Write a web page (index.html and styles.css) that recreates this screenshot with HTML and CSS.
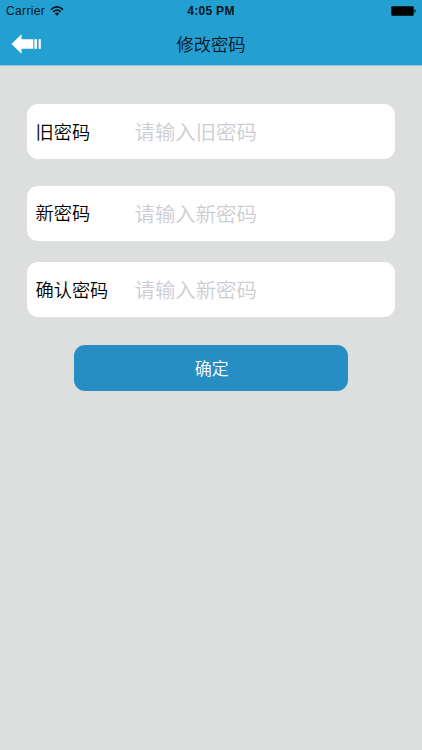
FILE: index.html
```html
<!DOCTYPE html>
<html lang="zh-CN">
<head>
<meta charset="utf-8">
<title>修改密码</title>
<link rel="stylesheet" href="styles.css">
</head>
<body>
<header class="header">
  <div class="status">
    <div class="carrier">
      <span>Carrier</span>
      <svg class="wifi" width="14" height="10" viewBox="0 0 14 10" fill="none" stroke="#04151d" stroke-width="1.7">
        <path d="M1 3.6Q7-1.8 13 3.6M3.2 5.9Q7 2.5 10.8 5.9"/>
        <path d="M4.7 7.4Q7 5.4 9.3 7.4L7 9.7Z" fill="#04151d" stroke="none"/>
      </svg>
    </div>
    <span class="time">4:05 PM</span>
    <svg class="battery" width="25" height="10" viewBox="0 0 25 10">
      <rect x=".3" y=".2" width="22.4" height="9.6" rx="1" fill="#000"/>
      <path d="M23.4 3.2Q24.8 3.4 24.8 5T23.4 6.8Z" fill="#04151d"/>
    </svg>
  </div>
  <div class="nav">
    <svg class="back" width="31" height="20" viewBox="0 0 31 20" fill="#fff">
      <path d="M.5 10 10.5.3V5.3H22.3V14.7H10.5V19.7Z"/>
      <path d="M23.4 5.3H26V14.7H23.4ZM27.6 5.3H29.8V14.7H27.6Z"/>
    </svg>
    <h1 class="title">修改密码</h1>
  </div>
</header>
<form class="form">
  <label class="field"><span class="label">旧密码</span><input class="input" type="password" placeholder="请输入旧密码"></label>
  <label class="field"><span class="label">新密码</span><input class="input" type="password" placeholder="请输入新密码"></label>
  <label class="field"><span class="label">确认密码</span><input class="input" type="password" placeholder="请输入新密码"></label>
  <button class="submit" type="button">确定</button>
</form>
</body>
</html>
```
FILE: styles.css
```css
* { box-sizing: border-box; }

body {
  margin: 0;
  min-height: 750px;
  background: #dddfde;
  font-family: "Liberation Sans", "Noto Sans CJK SC", sans-serif;
  color: #000;
}

.header {
  height: 66px;
  background: #23a0d1;
  border-bottom: 1px solid #8fc3d9;
}

.status {
  display: grid;
  grid-template-columns: 1fr auto 1fr;
  align-items: center;
  height: 22px;
  padding: 0 6px;
}

.carrier {
  display: flex;
  align-items: center;
  gap: 5px;
  font-size: 12px;
  letter-spacing: .35px;
  color: #04151d;
}

.wifi { margin-top: -1px; }

.time {
  font-size: 12px;
  font-weight: 700;
  letter-spacing: .3px;
  color: #04151d;
}

.battery { justify-self: end; }

.nav {
  display: grid;
  grid-template-columns: 1fr auto 1fr;
  align-items: center;
  height: 44px;
  padding: 0 11px;
}

.title {
  margin: 0;
  font: 350 17.3px/42px "Noto Sans CJK SC", sans-serif;
  color: #03151c;
}

.form {
  display: flex;
  flex-direction: column;
  padding: 38px 27px 0 26.5px;
}

.field {
  display: flex;
  align-items: center;
  height: 55px;
  margin-bottom: 26.5px;
  padding: 0 0 1px 9px;
  border-radius: 11px;
  background: #fff;
}

.field:nth-child(2) { margin-bottom: 21.5px; }
.field:nth-child(3) { margin-bottom: 27.5px; }

.label {
  width: 99px;
  font: 350 18.2px/27px "Noto Sans CJK SC", sans-serif;
}

.input {
  flex: 1;
  min-width: 0;
  height: 40px;
  padding: 0;
  border: 0;
  outline: 0;
  background: none;
  font: 350 20.4px "Noto Sans CJK SC", sans-serif;
}

.input::placeholder {
  color: #cdcdd1;
  opacity: 1;
}

.submit {
  align-self: center;
  width: 274px;
  height: 46.5px;
  margin-left: 1px;
  padding: 0 0 1px 1px;
  border: 0;
  border-radius: 11px;
  background: #278ec4;
  color: #fff;
  font: 350 17px "Noto Sans CJK SC", sans-serif;
}
```
